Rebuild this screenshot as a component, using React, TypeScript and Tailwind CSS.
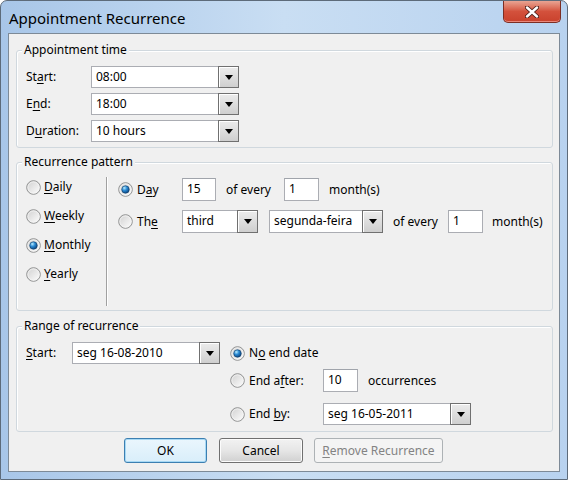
import type { ReactNode } from 'react'

function Radio({ checked }: { checked?: boolean }) {
  return (
    <svg width="15" height="15" viewBox="0 0 15 15" className="shrink-0">
      <defs>
        <linearGradient id="rbg" x1="0" y1="0" x2="1" y2="1">
          <stop offset="0" stopColor="#cfcfcf" />
          <stop offset="1" stopColor="#ffffff" />
        </linearGradient>
        <radialGradient id="rdot" cx="0.35" cy="0.3" r="0.75">
          <stop offset="0" stopColor="#b8ecff" />
          <stop offset="0.45" stopColor="#2a8ad4" />
          <stop offset="1" stopColor="#0a3f78" />
        </radialGradient>
      </defs>
      <circle cx="7.5" cy="7.5" r="6.8" fill="url(#rbg)" stroke="#8e8f8f" strokeWidth="1" />
      <circle cx="7.5" cy="7.5" r="5.6" fill="none" stroke="#f4f4f4" strokeWidth="0.8" />
      {checked && <circle cx="7.5" cy="7.5" r="3.8" fill="url(#rdot)" stroke="#0d3a66" strokeWidth="0.6" />}
    </svg>
  )
}

function U({ children }: { children: ReactNode }) {
  return <span className="underline underline-offset-2 decoration-1">{children}</span>
}

function Combo({ value, className }: { value: string; className: string }) {
  return (
    <div className={`flex items-stretch border border-[#abadb3] bg-white ${className}`}>
      <div className="flex-1 pl-[4px] leading-[20px] truncate">{value}</div>
      <div className="-my-px -mr-px w-[21px] border border-[#707070] bg-gradient-to-b from-[#ececec] to-[#cfcfcf] flex items-center justify-center shadow-[inset_1px_1px_0_#fff]">
        <svg width="8" height="5" viewBox="0 0 8 5">
          <path d="M0 0 H8 L4 5 Z" fill="#000" />
        </svg>
      </div>
    </div>
  )
}

function Field({ value, className }: { value: string; className: string }) {
  return (
    <div className={`border border-[#abadb3] border-t-[#a0a4ab] bg-white pl-[4px] leading-[20px] ${className}`}>
      {value}
    </div>
  )
}

function Group({ title, className, children }: { title: string; className: string; children: ReactNode }) {
  return (
    <div className={`border border-[#d0d8de] rounded-[3px] shadow-[inset_1px_1px_0_#fff] ${className}`}>
      <div className="-mt-[9px] ml-[5px] px-[2px] w-fit bg-[#f0f0f0] leading-[16px]">{title}</div>
      {children}
    </div>
  )
}

function Btn({ children, className }: { children: ReactNode; className: string }) {
  return (
    <div
      className={`h-[25px] rounded-[3px] flex items-center justify-center border ${className}`}
    >
      {children}
    </div>
  )
}

export default function App() {
  return (
    <div className="w-[568px] h-[480px] flex flex-col border border-[#5d6b7a] rounded-t-[7px] bg-gradient-to-r from-[#a8c6e8] via-[#c9def3] to-[#b8d2ef] text-[12px] text-black font-['Segoe_UI','Noto_Sans',sans-serif]">
      {/* Title bar */}
      <div className="h-[32px] shrink-0 flex items-start justify-between pl-[8px] pr-[6px]">
        <div className="mt-[6px] text-[15px] leading-[22px]">Appointment Recurrence</div>
        <div className="h-[22px] w-[58px] rounded-b-[5px] border border-t-0 border-[#7c2e24] bg-gradient-to-b from-[#e8a493] via-[#d3513c] to-[#c9412c] flex items-center justify-center shadow-[inset_0_-1px_0_#e9877a]">
          <svg width="14" height="12" viewBox="0 0 14 12">
            <path d="M2 1.5 L12 10.5 M12 1.5 L2 10.5" stroke="#4a1d18" strokeWidth="4.2" strokeLinecap="round" />
            <path d="M2 1.5 L12 10.5 M12 1.5 L2 10.5" stroke="#ffffff" strokeWidth="2.4" strokeLinecap="round" />
          </svg>
        </div>
      </div>

      {/* Client area */}
      <div className="mx-[7px] h-[439px] border border-[#7d8a97] bg-[#f0f0f0] pl-[7px] pr-[6px] flex flex-col">
        {/* Appointment time */}
        <Group title="Appointment time" className="mt-[16px] h-[98px]">
          <div className="mt-[8px] pl-[9px] flex flex-col gap-[5px]">
            <div className="flex items-center h-[22px]">
              <div className="w-[65px]">
                St<U>a</U>rt:
              </div>
              <Combo value="08:00" className="w-[148px] h-[22px]" />
            </div>
            <div className="flex items-center h-[22px]">
              <div className="w-[65px]">
                E<U>n</U>d:
              </div>
              <Combo value="18:00" className="w-[148px] h-[22px]" />
            </div>
            <div className="flex items-center h-[22px]">
              <div className="w-[65px]">
                D<U>u</U>ration:
              </div>
              <Combo value="10 hours" className="w-[148px] h-[22px]" />
            </div>
          </div>
        </Group>

        {/* Recurrence pattern */}
        <Group title="Recurrence pattern" className="mt-[14px] h-[149px]">
          <div className="mt-[7px] flex h-[129px]">
            <div className="w-[89px] pl-[9px] pt-[2px] flex flex-col gap-[13px]">
              <div className="flex items-center gap-[3px] h-[16px]">
                <Radio />
                <span>
                  <U>D</U>aily
                </span>
              </div>
              <div className="flex items-center gap-[3px] h-[16px]">
                <Radio />
                <span>
                  <U>W</U>eekly
                </span>
              </div>
              <div className="flex items-center gap-[3px] h-[16px]">
                <Radio checked />
                <span>
                  <U>M</U>onthly
                </span>
              </div>
              <div className="flex items-center gap-[3px] h-[16px]">
                <Radio />
                <span>
                  <U>Y</U>early
                </span>
              </div>
            </div>
            <div className="flex-1 border-l border-[#a0a0a0] shadow-[inset_1px_0_0_#fff] pl-[11px] pt-[1px] flex flex-col gap-[9px]">
              <div className="flex items-center h-[23px]">
                <div className="w-[64px] flex items-center gap-[4px]">
                  <Radio checked />
                  <span>
                    D<U>a</U>y
                  </span>
                </div>
                <Field value="15" className="w-[34px] h-[23px]" />
                <div className="ml-[10px] w-[58px]">of every</div>
                <Field value="1" className="w-[35px] h-[23px]" />
                <div className="ml-[10px]">month(s)</div>
              </div>
              <div className="flex items-center h-[23px]">
                <div className="w-[64px] flex items-center gap-[4px]">
                  <Radio />
                  <span>
                    Th<U>e</U>
                  </span>
                </div>
                <Combo value="third" className="w-[76px] h-[23px]" />
                <Combo value="segunda-feira" className="ml-[11px] w-[114px] h-[23px]" />
                <div className="ml-[10px] w-[55px]">of every</div>
                <Field value="1" className="w-[35px] h-[23px]" />
                <div className="ml-[9px]">month(s)</div>
              </div>
            </div>
          </div>
        </Group>

        {/* Range of recurrence */}
        <Group title="Range of recurrence" className="mt-[15px] h-[106px]">
          <div className="mt-[8px] pl-[9px] flex items-start">
            <div className="w-[46px] leading-[22px]">
              <U>S</U>tart:
            </div>
            <Combo value="seg 16-08-2010" className="w-[148px] h-[22px]" />
            <div className="ml-[10px] flex flex-col">
              <div className="flex items-center h-[22px] gap-[4px]">
                <Radio checked />
                <span>
                  N<U>o</U> end date
                </span>
              </div>
              <div className="mt-[5px] flex items-center h-[23px]">
                <div className="w-[93px] flex items-center gap-[4px]">
                  <Radio />
                  <span>
                    End a<U>f</U>ter:
                  </span>
                </div>
                <Field value="10" className="w-[35px] h-[23px]" />
                <div className="ml-[10px]">occurrences</div>
              </div>
              <div className="mt-[11px] flex items-center h-[22px]">
                <div className="w-[93px] flex items-center gap-[4px]">
                  <Radio />
                  <span>
                    End <U>b</U>y:
                  </span>
                </div>
                <Combo value="seg 16-05-2011" className="w-[148px] h-[22px]" />
              </div>
            </div>
          </div>
        </Group>

        {/* Buttons */}
        <div className="mt-[6px] ml-[108px] flex">
          <Btn className="w-[83px] border-[#3c7fb1] bg-gradient-to-b from-[#eaf6fd] to-[#d9eefa] shadow-[inset_0_0_0_1px_#a7d9f5]">OK</Btn>
          <Btn className="ml-[12px] w-[84px] border-[#707070] bg-gradient-to-b from-[#f2f2f2] via-[#e6e6e6] to-[#d0d0d0] shadow-[inset_0_0_0_1px_#fcfcfc]">
            Cancel
          </Btn>
          <Btn className="ml-[11px] w-[129px] border-[#adb2b5] bg-[#f4f4f4] text-[#838383]">
            <span>
              <U>R</U>emove Recurrence
            </span>
          </Btn>
        </div>
      </div>
    </div>
  )
}
